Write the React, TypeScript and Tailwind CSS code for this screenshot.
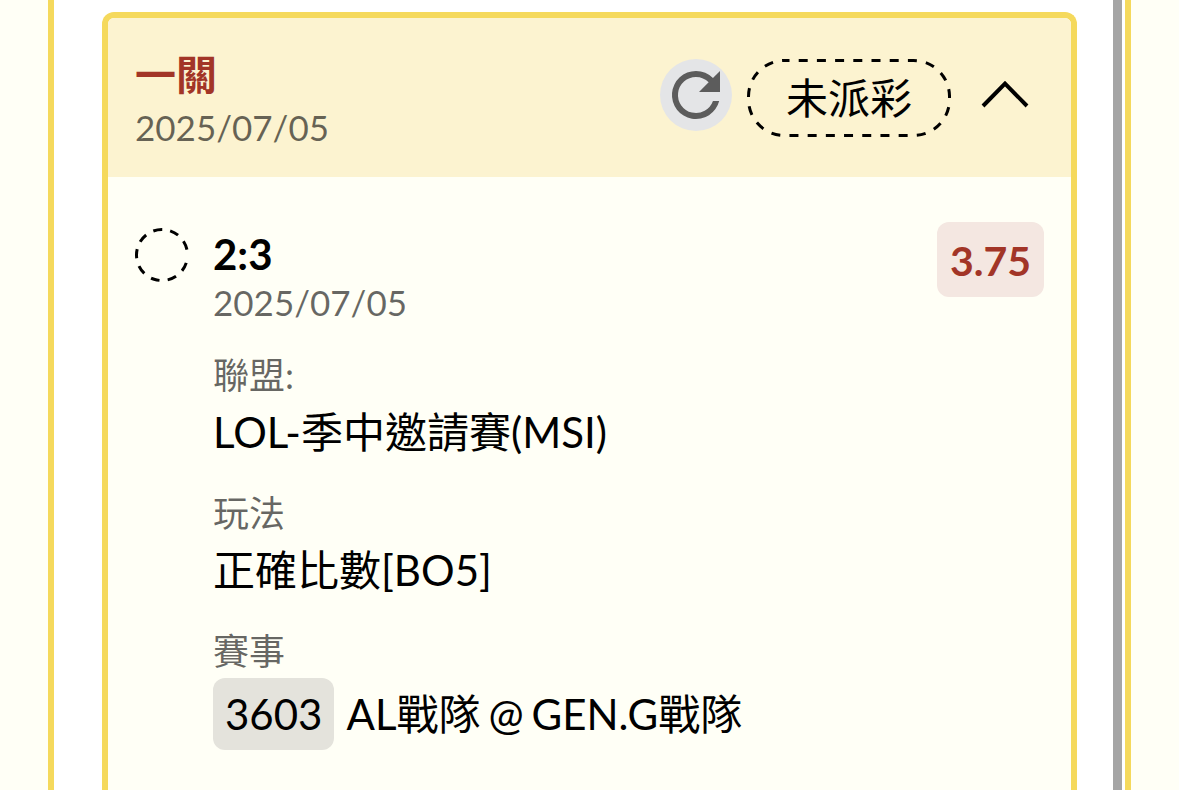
import React from 'react';

interface Field {
  label: string;
  value?: string;
}

const bet = {
  title: '一關',
  date: '2025/07/05',
  status: '未派彩',
  pick: '2:3',
  pickDate: '2025/07/05',
  odds: '3.75',
};

const fields: Field[] = [
  { label: '聯盟:', value: 'LOL-季中邀請賽(MSI)' },
  { label: '玩法', value: '正確比數[BO5]' },
];

const match = { label: '賽事', code: '3603', away: 'AL戰隊', home: 'GEN.G戰隊' };

function RefreshIcon() {
  return (
    <svg viewBox="0 0 24 24" className="w-full h-full" fill="currentColor" aria-hidden="true">
      <path d="M17.65 6.35A7.96 7.96 0 0 0 12 4a8 8 0 1 0 7.73 10h-2.08A6 6 0 1 1 12 6c1.66 0 3.14.69 4.22 1.78L13 11h7V4l-2.35 2.35z" />
    </svg>
  );
}

function ChevronUpIcon() {
  return (
    <svg viewBox="0 0 48 48" className="w-12 h-12" fill="none" stroke="currentColor" strokeWidth="4" aria-hidden="true">
      <path d="M2 35 24 12.5 46 35" />
    </svg>
  );
}

function PendingCircle() {
  return (
    <svg viewBox="0 0 54 54" className="w-[54px] h-[54px] mt-1.5 shrink-0" fill="none" stroke="black" strokeWidth="3" aria-hidden="true">
      <circle
        cx="27"
        cy="27"
        r="25.5"
        strokeDasharray="9 8.1 9 8.1 9 8.1 9 8.1 9 8.1 9 8.1 9 8.1 9 8.1 9 30"
        transform="rotate(18 27 27)"
      />
    </svg>
  );
}

function StatusPill({ children }: { children: React.ReactNode }) {
  return (
    <div className="relative ml-[15px] px-[39px] h-[78px] flex items-center text-[42px] whitespace-nowrap">
      <svg className="absolute inset-0 w-full h-full" fill="none" stroke="black" strokeWidth="3" aria-hidden="true">
        <rect
          x="1.5"
          y="1.5"
          rx="36"
          className="w-[calc(100%-3px)] h-[calc(100%-3px)]"
          strokeDasharray="9 9.2"
          strokeDashoffset="4"
        />
      </svg>
      <span>{children}</span>
    </div>
  );
}

export default function App() {
  const [open, setOpen] = React.useState(true);

  return (
    <div className="min-h-screen flex bg-[#fffff6] px-12 text-black font-['Lato','Noto_Sans_CJK_TC',sans-serif]">
      <main className="flex-1 flex bg-white border-x-6 border-[#f5d95c] pl-12 pr-[3px]">
        <section className="flex-1 mt-3 mr-9 bg-[#fffff6] border-6 border-b-0 border-[#f5d95c] rounded-t-xl">
          <header className="flex items-start justify-between bg-[#fcf3d0] rounded-t-md pl-[27px] pr-[42px] pb-6">
            <div className="pt-[31px]">
              <h2 className="text-[41px] leading-[52px] font-bold text-[#a23527]">{bet.title}</h2>
              <p className="text-[35px] leading-[52px] text-black/60">{bet.date}</p>
            </div>
            <div className="flex items-start pt-[41px]">
              <button
                type="button"
                aria-label="重新整理"
                className="w-[72px] h-[72px] rounded-full bg-[#e4e5e7] text-[#5c5c5c]"
              >
                <RefreshIcon />
              </button>
              <StatusPill>{bet.status}</StatusPill>
              <button
                type="button"
                aria-label="收合"
                aria-expanded={open}
                onClick={() => setOpen(!open)}
                className={`ml-[30px] h-[72px] flex items-center ${open ? '' : 'rotate-180'}`}
              >
                <ChevronUpIcon />
              </button>
            </div>
          </header>

          {open && (
            <div className="flex items-start px-[27px] pt-[45px] pb-10">
              <PendingCircle />
              <div className="flex-1 ml-6 pt-2">
                <h3 className="text-[42px] leading-[48px] font-bold">{bet.pick}</h3>
                <p className="text-[35px] leading-[48px] text-black/60">{bet.pickDate}</p>
                <dl className="mt-[22px] space-y-6">
                  {fields.map((field) => (
                    <div key={field.label}>
                      <dt className="text-[36px] leading-[54px] text-black/60">{field.label}</dt>
                      <dd className="text-[42px] leading-[60px]">{field.value}</dd>
                    </div>
                  ))}
                  <div>
                    <dt className="text-[36px] leading-[54px] text-black/60">{match.label}</dt>
                    <dd className="flex items-center gap-2 text-[42px] leading-[72px]">
                      <span className="mr-1 px-3 rounded-xl bg-[#e4e3dc]">{match.code}</span>
                      <span>{match.away}</span>
                      <span>@</span>
                      <span>{match.home}</span>
                    </dd>
                  </div>
                </dl>
              </div>
              <div className="px-[13px] pt-[3px] text-[41px] leading-[72px] font-bold text-[#a23527] bg-[#f4e7e1] rounded-xl">
                {bet.odds}
              </div>
            </div>
          )}
        </section>
        <div className="w-[9px] bg-[#a5a5a5]" />
      </main>
    </div>
  );
}
